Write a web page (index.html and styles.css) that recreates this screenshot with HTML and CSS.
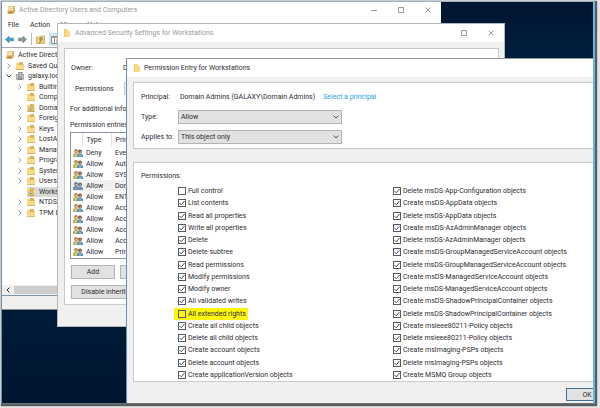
FILE: index.html
```html
<!DOCTYPE html>
<html lang="en">
<head>
  <meta charset="UTF-8" />
  <title>Permission Entry for Workstations</title>
  <link rel="stylesheet" href="styles.css">
</head>
<body>
  <svg class="sprite" aria-hidden="true">
    <symbol id="folder" viewBox="0 0 8 8">
      <path d="M0 1h3l1 1h4v6H0z" fill="#f3d27c" />
      <path d="M3 0h4v3H3z" fill="#d9b45c" />
      <path d="M0 3h8v5H0z" fill="#f7da8c" />
      <path d="M0 7.5h8" stroke="#dcb763" />
    </symbol>
    <symbol id="folder-ou" viewBox="0 0 8 8">
      <use href="#folder" />
      <path d="M2 4h4v3H2z" fill="#fff3c9" stroke="#9a7f47" stroke-width=".7" />
      <path d="M3 5.5h2" stroke="#7d6a45" stroke-width=".8" />
    </symbol>
    <symbol id="folder-plain" viewBox="0 0 6 8">
      <path d="M0 0h4v2h2v6H0z" fill="#fbd98a" />
      <path d="M0 0h1v8H0z" fill="#f3c766" />
    </symbol>
    <symbol id="book" viewBox="0 0 8 9">
      <path d="M1 0h7v7H1z" fill="#efc878" />
      <path d="M0 5h7v4H0z" fill="#e3b25c" />
      <path d="M2 2h5M2 4h4" stroke="#fff6df" />
      <path d="M1 7h5" stroke="#8a6a3a" />
      <path d="M7.5 0v7" stroke="#b58a45" />
    </symbol>
    <symbol id="domain" viewBox="0 0 9 9">
      <path d="M3 0h4v6H3z" fill="#a9adb3" stroke="#6d7177" stroke-width=".7" />
      <path d="M0 3h3v5H0zM6 3h3v5H6z" fill="#c4c8cc" stroke="#777b80" stroke-width=".7" />
      <path d="M4 2h2M4 4h2" stroke="#fff" stroke-width=".7" />
      <path d="M2 7h5v2H2z" fill="#7d8288" />
    </symbol>
    <symbol id="users" viewBox="0 0 10 8">
      <circle cx="3" cy="2" r="2" fill="#b98a4a" />
      <path d="M0 8V5l2-1h2l2 1v3z" fill="#c8b24f" />
      <circle cx="7" cy="2.500" r="2" fill="#7a5a48" />
      <path d="M4 8V6l2-1.500h2L10 6v2z" fill="#5c93bd" />
      <path d="M2.500 2.500h1.500M6.500 3h1.500" stroke="#f1cfae" />
      <path d="M3 5v2M7 6v1.500" stroke="#e9eef0" stroke-width=".8" />
    </symbol>
    <symbol id="users-gray" viewBox="0 0 10 8">
      <circle cx="3" cy="2" r="2" fill="#6f7d92" />
      <path d="M0 8V5l2-1h2l2 1v3z" fill="#7f8da3" />
      <circle cx="7" cy="2.500" r="2" fill="#5d6a80" />
      <path d="M4 8V6l2-1.500h2L10 6v2z" fill="#6b8cad" />
      <path d="M2.500 2.500h1.500M6.500 3h1.500" stroke="#c5cedb" />
    </symbol>
    <symbol id="arrow" viewBox="0 0 10 8">
      <path d="M0.500 4L4.500 .5v2h5v3h-5v2z" fill="currentColor" stroke="#4d6675" stroke-width=".6" />
    </symbol>
    <symbol id="up-folder" viewBox="0 0 8 9">
      <path d="M0 2h3l1-1h4v8H0z" fill="#f0cd7a" stroke="#b99650" stroke-width=".6" />
      <path d="M2.500 7.500c2 0 2-1 2-4M3 4.500l1.500-2 1.500 2" fill="none" stroke="#6d7a3c" />
    </symbol>
    <symbol id="list" viewBox="0 0 9 9">
      <path d="M.5 1.500h8v7h-8z" fill="#fff" stroke="#8c8c8c" />
      <path d="M1 2.500h7" stroke="#b0a07a" />
      <path d="M3.500 3v5M5 5h3M5 7h2" stroke="#888" />
    </symbol>
    <symbol id="chevron" viewBox="0 0 4 6">
      <path d="M.5.5L3 3 .5 5.500" fill="none" stroke="currentColor" />
    </symbol>
    <symbol id="close" viewBox="0 0 6 6">
      <path d="M.5.500l5 5M5.500.5l-5 5" fill="none" stroke="currentColor" />
    </symbol>
    <symbol id="maximize" viewBox="0 0 6 6">
      <path d="M.5.500h5v5h-5z" fill="none" stroke="currentColor" />
    </symbol>
    <symbol id="minimize" viewBox="0 0 6 6">
      <path d="M0 3.500h6" stroke="currentColor" />
    </symbol>
  </svg>

  <main class="desktop">

    <section class="window window-aduc">
      <header class="titlebar">
        <svg class="icon"><use href="#book" /></svg>
        <h2>Active Directory Users and Computers</h2>
        <div class="controls">
          <button type="button" aria-label="Minimize"><svg><use href="#minimize" /></svg></button>
          <button type="button" aria-label="Maximize"><svg><use href="#maximize" /></svg></button>
          <button type="button" aria-label="Close"><svg><use href="#close" /></svg></button>
        </div>
      </header>
      <nav class="menu">
        <button type="button">File</button>
        <button type="button">Action</button>
        <button type="button">View</button>
        <button type="button">Help</button>
      </nav>
      <div class="toolbar">
        <button type="button" class="back" aria-label="Back"><svg><use href="#arrow" /></svg></button>
        <button type="button" class="forward" aria-label="Forward"><svg><use href="#arrow" /></svg></button>
        <span class="divider"></span>
        <button type="button" aria-label="Up one level"><svg><use href="#up-folder" /></svg></button>
        <button type="button" class="pressed" aria-label="Show console tree"><svg><use href="#list" /></svg></button>
      </div>
      <ul class="tree">
        <li class="root"><svg class="icon"><use href="#book" /></svg>Active Directory Users and Computers</li>
        <li class="level1"><svg class="twist"><use href="#chevron" /></svg><svg class="icon"><use href="#folder" /></svg>Saved Queries</li>
        <li class="level1 open"><svg class="twist"><use href="#chevron" /></svg><svg class="icon"><use href="#domain" /></svg>galaxy.local</li>
        <li><svg class="twist"><use href="#chevron" /></svg><svg class="icon"><use href="#folder" /></svg>Builtin</li>
        <li><span class="twist"></span><svg class="icon"><use href="#folder" /></svg>Computers</li>
        <li><svg class="twist"><use href="#chevron" /></svg><svg class="icon"><use href="#folder-ou" /></svg>Domain Controllers</li>
        <li><svg class="twist"><use href="#chevron" /></svg><svg class="icon"><use href="#folder" /></svg>ForeignSecurityPrincipals</li>
        <li><svg class="twist"><use href="#chevron" /></svg><svg class="icon"><use href="#folder" /></svg>Keys</li>
        <li><svg class="twist"><use href="#chevron" /></svg><svg class="icon"><use href="#folder" /></svg>LostAndFound</li>
        <li><svg class="twist"><use href="#chevron" /></svg><svg class="icon"><use href="#folder" /></svg>Managed Service Accounts</li>
        <li><svg class="twist"><use href="#chevron" /></svg><svg class="icon"><use href="#folder" /></svg>Program Data</li>
        <li><svg class="twist"><use href="#chevron" /></svg><svg class="icon"><use href="#folder" /></svg>System</li>
        <li><svg class="twist"><use href="#chevron" /></svg><svg class="icon"><use href="#folder" /></svg>Users</li>
        <li class="selected"><span class="twist"></span><span class="node"><svg class="icon"><use href="#folder-ou" /></svg>Workstations</span></li>
        <li><svg class="twist"><use href="#chevron" /></svg><svg class="icon"><use href="#folder" /></svg>NTDS Quotas</li>
        <li><svg class="twist"><use href="#chevron" /></svg><svg class="icon"><use href="#folder" /></svg>TPM Devices</li>
      </ul>
      <div class="scrollbar">
        <svg class="scroll-left"><use href="#chevron" /></svg>
        <span class="thumb"></span>
      </div>
      <footer class="statusbar"></footer>
    </section>

    <section class="window window-security">
      <header class="titlebar">
        <svg class="icon"><use href="#folder-plain" /></svg>
        <h2>Advanced Security Settings for Workstations</h2>
        <div class="controls">
          <button type="button" aria-label="Maximize"><svg><use href="#maximize" /></svg></button>
          <button type="button" aria-label="Close"><svg><use href="#close" /></svg></button>
        </div>
      </header>
      <div class="security-body">
        <dl class="owner">
          <dt>Owner:</dt>
          <dd>Domain Admins (GALAXY\Domain Admins)</dd>
        </dl>
        <div class="tabs">
          <button type="button" class="tab active">Permissions</button>
          <button type="button" class="tab">Auditing</button>
        </div>
        <div class="tab-page">
          <p>For additional information, double-click a permission entry.</p>
          <p class="caption">Permission entries:</p>
          <div class="entries">
            <table>
              <thead>
                <tr><th class="who"></th><th class="type">Type</th><th>Principal</th></tr>
              </thead>
              <tbody>
                <tr><td><svg class="icon"><use href="#users" /></svg></td><td>Deny</td><td>Everyone</td></tr>
                <tr><td><svg class="icon"><use href="#users" /></svg></td><td>Allow</td><td>Authenticated Users</td></tr>
                <tr><td><svg class="icon"><use href="#users" /></svg></td><td>Allow</td><td>SYSTEM</td></tr>
                <tr class="current"><td><svg class="icon"><use href="#users-gray" /></svg></td><td>Allow</td><td>Domain Admins</td></tr>
                <tr><td><svg class="icon"><use href="#users" /></svg></td><td>Allow</td><td>ENTERPRISE DOMAIN</td></tr>
                <tr><td><svg class="icon"><use href="#users" /></svg></td><td>Allow</td><td>Account Operators</td></tr>
                <tr><td><svg class="icon"><use href="#users" /></svg></td><td>Allow</td><td>Account Operators</td></tr>
                <tr><td><svg class="icon"><use href="#users" /></svg></td><td>Allow</td><td>Account Operators</td></tr>
                <tr><td><svg class="icon"><use href="#users" /></svg></td><td>Allow</td><td>Account Operators</td></tr>
                <tr><td><svg class="icon"><use href="#users" /></svg></td><td>Allow</td><td>Print Operators</td></tr>
              </tbody>
            </table>
          </div>
          <div class="buttons">
            <button type="button" class="btn">Add</button>
            <button type="button" class="btn">Remove</button>
          </div>
          <div class="buttons">
            <button type="button" class="btn wide">Disable inheritance</button>
          </div>
        </div>
      </div>
    </section>

    <section class="window window-entry">
      <header class="titlebar">
        <svg class="icon"><use href="#folder-plain" /></svg>
        <h2>Permission Entry for Workstations</h2>
      </header>
      <form class="entry-form">
        <div class="panel principal">
          <div class="field">
            <span class="name">Principal:</span>
            <span>Domain Admins (GALAXY\Domain Admins)</span>
            <a href="#">Select a principal</a>
          </div>
          <div class="field">
            <label class="name" for="type">Type:</label>
            <select id="type"><option>Allow</option><option>Deny</option></select>
          </div>
          <div class="field">
            <label class="name" for="applies">Applies to:</label>
            <select id="applies"><option>This object only</option><option>This object and all descendant objects</option></select>
          </div>
        </div>

        <div class="panel permissions">
          <h3>Permissions:</h3>
          <div class="columns">
            <div class="checks">
              <label><input type="checkbox">Full control</label>
              <label><input type="checkbox" checked>List contents</label>
              <label><input type="checkbox" checked>Read all properties</label>
              <label><input type="checkbox" checked>Write all properties</label>
              <label><input type="checkbox" checked>Delete</label>
              <label><input type="checkbox" checked>Delete subtree</label>
              <label><input type="checkbox" checked>Read permissions</label>
              <label><input type="checkbox" checked>Modify permissions</label>
              <label><input type="checkbox" checked>Modify owner</label>
              <label><input type="checkbox" checked>All validated writes</label>
              <label class="marked"><input type="checkbox">All extended rights</label>
              <label><input type="checkbox" checked>Create all child objects</label>
              <label><input type="checkbox" checked>Delete all child objects</label>
              <label><input type="checkbox" checked>Create account objects</label>
              <label><input type="checkbox" checked>Delete account objects</label>
              <label><input type="checkbox" checked>Create applicationVersion objects</label>
            </div>
            <div class="checks">
              <label><input type="checkbox" checked>Delete msDS-App-Configuration objects</label>
              <label><input type="checkbox" checked>Create msDS-AppData objects</label>
              <label><input type="checkbox" checked>Delete msDS-AppData objects</label>
              <label><input type="checkbox" checked>Create msDS-AzAdminManager objects</label>
              <label><input type="checkbox" checked>Delete msDS-AzAdminManager objects</label>
              <label><input type="checkbox" checked>Create msDS-GroupManagedServiceAccount objects</label>
              <label><input type="checkbox" checked>Delete msDS-GroupManagedServiceAccount objects</label>
              <label><input type="checkbox" checked>Create msDS-ManagedServiceAccount objects</label>
              <label><input type="checkbox" checked>Delete msDS-ManagedServiceAccount objects</label>
              <label><input type="checkbox" checked>Create msDS-ShadowPrincipalContainer objects</label>
              <label><input type="checkbox" checked>Delete msDS-ShadowPrincipalContainer objects</label>
              <label><input type="checkbox" checked>Create msieee80211-Policy objects</label>
              <label><input type="checkbox" checked>Delete msieee80211-Policy objects</label>
              <label><input type="checkbox" checked>Create msImaging-PSPs objects</label>
              <label><input type="checkbox" checked>Delete msImaging-PSPs objects</label>
              <label><input type="checkbox" checked>Create MSMQ Group objects</label>
            </div>
          </div>
        </div>

        <footer class="actions">
          <button type="submit" class="btn ok">OK</button>
        </footer>
      </form>
    </section>

  </main>
</body>
</html>
```

FILE: styles.css
```css
:root {
  --color-text: #2f2b33;
  --color-muted: #999;
  --color-face: #f0f0f0;
  --color-line: #c8cacc;
  --color-button: #e1e1e1;
  --color-desktop: #001a38;
  --color-link: #2a9fdc;
  --color-mark: #fdf510;
}

* {
  box-sizing: border-box;
}

body {
  margin: 0;
  height: 100vh;
  padding: 1px 5px 4px 1px;
  background: #e4e4e4;
  color: var(--color-text);
  font-family: Roboto, "Open Sans", sans-serif;
  font-size: 7px;
  line-height: 10px;
  overflow: hidden;
}

h2, h3, p, ul, dl, dd {
  margin: 0;
  padding: 0;
  font-size: inherit;
  font-weight: normal;
}

button, input, select {
  margin: 0;
  padding: 0;
  border: 0;
  background: none;
  font: inherit;
  color: inherit;
}

svg {
  display: block;
  flex: none;
}

.sprite {
  position: absolute;
  width: 0;
  height: 0;
}

.icon {
  width: 8px;
  height: 8px;
}

.desktop {
  position: relative;
  height: 100%;
  overflow: hidden;
  background: linear-gradient(#001530, #00203f 15%, #00203f 60%, #001530);
  border-left: 1px solid #7590a8;
  border-right: 2px solid #62b8e0;
  border-top: 1px solid #9fb4c2;
  border-bottom: 1px solid #66747f;
  box-shadow: 1px 1px 1px 1px #5c5c5c;
}

/* windows */

.window {
  position: absolute;
  display: flex;
  flex-direction: column;
  overflow: hidden;
  background: var(--color-face);
  white-space: nowrap;
}

.window-aduc {
  left: 0;
  top: 0;
  right: 152px;
  bottom: 93px;
  background: #fff;
  border-bottom: 1px solid #8a8a8a;
}

.window-security {
  left: 55px;
  top: 21px;
  right: 88px;
  bottom: 76px;
  border: 1px solid #b5b8bb;
}

.window-entry {
  left: 124px;
  top: 56px;
  right: 0;
  bottom: 0;
  border-left: 1px solid #6f8db0;
  border-top: 1px solid #999;
}

.titlebar {
  display: flex;
  align-items: center;
  flex: none;
  gap: 4px;
  height: 18px;
  padding: 0 10px 0 5px;
  background: #fff;
}

.window-aduc .titlebar,
.window-security .titlebar {
  color: var(--color-muted);
}

.window-aduc .titlebar {
  height: 16px;
}

.controls {
  display: flex;
  gap: 21px;
  margin-left: auto;
}

.controls svg {
  width: 6px;
  height: 6px;
}

/* users and computers */

.menu {
  display: flex;
  gap: 11px;
  height: 13px;
  padding: 0 6px;
}

.toolbar {
  display: flex;
  align-items: center;
  gap: 4px;
  height: 17px;
  padding: 0 3px;
  border-bottom: 1px solid #a5a9ac;
}

.toolbar svg {
  width: 9px;
  height: 9px;
}

.back {
  color: #35a9dd;
}

.forward {
  color: #8f979d;
  transform: scaleX(-1);
}

.divider {
  width: 1px;
  height: 12px;
  background: #b9b9b9;
}

.pressed {
  padding: 2px;
  background: #cde8f7;
}

.tree {
  display: grid;
  grid-template-rows: repeat(16, 1fr);
  height: 170px;
  padding-top: 2px;
  list-style: none;
}

.tree li {
  display: flex;
  align-items: center;
  gap: 4px;
  padding-left: 16px;
}

.tree .level1 {
  padding-left: 5px;
}

.tree .root {
  padding-left: 4px;
}

.twist {
  width: 4px;
  height: 6px;
  margin-right: 1px;
  color: #999;
}

.open .twist {
  color: #444;
  transform: rotate(90deg);
}

.node {
  display: flex;
  align-items: center;
  gap: 4px;
  flex: 1;
  background: #d9d9d9;
}

.scrollbar {
  display: flex;
  align-items: center;
  gap: 4px;
  height: 10px;
  margin-top: auto;
  padding: 0 4px;
  background: var(--color-face);
}

.scroll-left {
  width: 4px;
  height: 6px;
  transform: scaleX(-1);
}

.thumb {
  flex: 1;
  height: 8px;
  background: #cdcdcd;
}

.statusbar {
  height: 14px;
  background: var(--color-face);
  border-top: 1px solid #7f95a8;
}

/* advanced security */

.security-body {
  flex: 1;
  margin: 6px 5px 21px 6px;
  background: #fff;
  border: 1px solid var(--color-line);
}

.owner {
  display: flex;
  height: 33px;
  padding: 14px 6px 0;
}

.owner dt {
  width: 52px;
}

.tabs {
  display: flex;
  height: 13px;
  background: var(--color-face);
}

.tab {
  padding: 0 9px;
  background: var(--color-face);
  border: 1px solid var(--color-line);
}

.tab.active {
  background: #fff;
  border-color: #fff;
}

.tab-page {
  padding: 9px 5px 0;
}

.tab-page p {
  height: 16px;
}

.tab-page .caption {
  height: 12px;
}

.entries {
  height: 127px;
  border: 1px solid #8593a3;
}

.entries table {
  width: 100%;
  height: 125px;
  border-collapse: collapse;
  table-layout: fixed;
}

.entries th {
  height: 14px;
  padding: 0 0 0 4px;
  border-left: 1px solid #e2e2e2;
  font-weight: normal;
  text-align: left;
}

.entries .who {
  width: 11px;
  border: 0;
}

.entries .type {
  width: 29px;
}

.entries td {
  padding: 0 0 0 4px;
  line-height: 8px;
}

.entries td:first-child {
  padding: 0 0 0 2px;
}

.entries .icon {
  width: 10px;
}

.current {
  background: var(--color-face);
}

.buttons {
  display: flex;
  gap: 5px;
  padding: 6px 0 0 1px;
}

.btn {
  width: 44px;
  height: 14px;
  background: var(--color-button);
  border: 1px solid #b4b4b4;
}

.btn.wide {
  width: 80px;
}

/* permission entry */

.window-entry .titlebar {
  gap: 3px;
  padding-left: 6px;
}

.entry-form {
  display: flex;
  flex-direction: column;
  flex: 1;
  padding: 5px 0 0 6px;
}

.panel {
  background: #fff;
  border: 1px solid var(--color-line);
  border-right: 0;
}

.principal {
  display: flex;
  flex-direction: column;
  gap: 6px;
  height: 67px;
  padding: 7px 7px 0;
}

.field {
  display: flex;
  align-items: center;
  height: 14px;
}

.field .name {
  width: 37px;
}

.field a {
  margin-left: 8px;
  color: var(--color-link);
  text-decoration: none;
}

.field span + span {
  padding-left: 2px;
}

.field select {
  width: 164px;
  height: 14px;
  padding: 0 2px;
  appearance: none;
  border: 1px solid #b4b4b4;
  background: var(--color-button) url("data:image/svg+xml,%3Csvg xmlns='http://www.w3.org/2000/svg' width='6' height='4'%3E%3Cpath d='M.5.5L3 3 5.5.5' fill='none' stroke='%23555'/%3E%3C/svg%3E") no-repeat right 2px center;
}

.permissions {
  height: 220px;
  margin-top: 13px;
  padding: 8px 7px 0;
}

.columns {
  display: grid;
  grid-template-columns: 215px 1fr;
  padding: 4px 0 0 37px;
}

.checks {
  display: grid;
  grid-template-rows: repeat(16, 1fr);
  justify-items: start;
  height: 196px;
}

.checks label {
  display: flex;
  align-items: center;
  gap: 2px;
}

.checks input {
  width: 8px;
  height: 8px;
  flex: none;
  appearance: none;
  background: #fff;
  border: 1px solid #555b66;
}

.checks input:checked {
  background: #fff url("data:image/svg+xml,%3Csvg xmlns='http://www.w3.org/2000/svg' width='6' height='6'%3E%3Cpath d='M.5 3L2.300 4.800 5.500 1' fill='none' stroke='%23444c58'/%3E%3C/svg%3E") no-repeat center;
}

.checks .marked {
  margin-left: -4px;
  padding: 0 2px 0 4px;
  background: var(--color-mark);
}

.checks .marked input {
  background: var(--color-mark);
}

.actions {
  display: flex;
  justify-content: flex-end;
  padding-top: 6px;
}

.btn.ok {
  width: 27px;
  height: 13px;
  padding-left: 14px;
  border: 1px solid #3f6f96;
  border-right: 0;
}
```
